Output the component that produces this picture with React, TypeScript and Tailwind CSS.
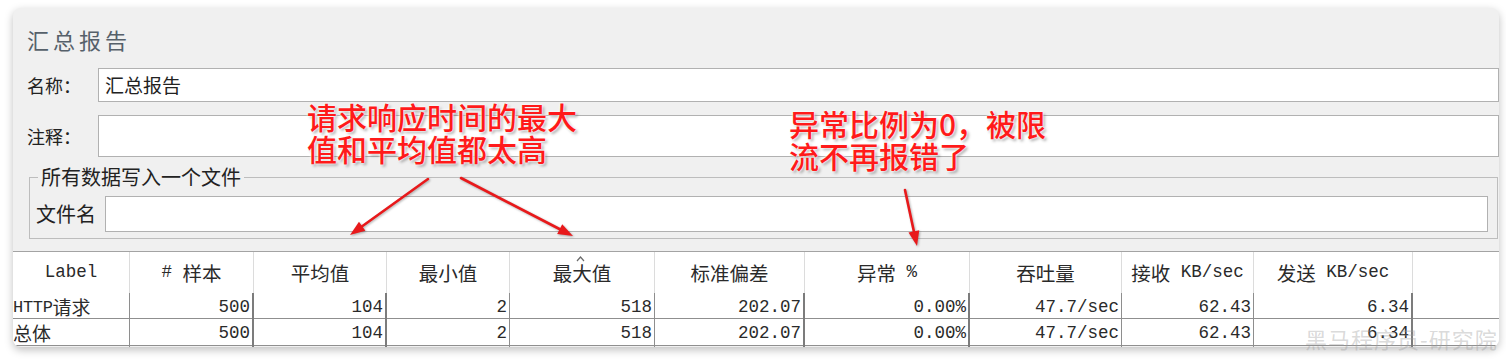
import React from "react";

const CJK = "font-[family-name:'Noto_Sans_CJK_SC','Noto_Sans',sans-serif]";
const MONO = "font-[family-name:'Liberation_Mono','Noto_Sans_CJK_SC',monospace]";

function Arrow({ x1, y1, x2, y2 }: { x1: number; y1: number; x2: number; y2: number }) {
  const dx = x2 - x1;
  const dy = y2 - y1;
  const len = Math.hypot(dx, dy);
  const ux = dx / len;
  const uy = dy / len;
  const L = 15;
  const W = 5.5;
  const bx = x2 - ux * L;
  const by = y2 - uy * L;
  const px = -uy * W;
  const py = ux * W;
  return (
    <g>
      <line x1={x1} y1={y1} x2={bx + ux * 3} y2={by + uy * 3} stroke="#e8191b" strokeWidth={2.6} strokeLinecap="round" />
      <polygon points={`${x2},${y2} ${bx + px},${by + py} ${bx - px},${by - py}`} fill="#e8191b" />
    </g>
  );
}

const C = ({ children }: { children: React.ReactNode }) => (
  <span className={`${CJK} text-[19.5px]`}>{children}</span>
);
const M = ({ children }: { children: React.ReactNode }) => (
  <span className={`${MONO} text-[17.5px]`}>{children}</span>
);

const headers: React.ReactNode[] = [
  <M>Label</M>,
  <>
    <M># </M>
    <C>样本</C>
  </>,
  <C>平均值</C>,
  <C>最小值</C>,
  <C>最大值</C>,
  <C>标准偏差</C>,
  <>
    <C>异常</C>
    <M> %</M>
  </>,
  <C>吞吐量</C>,
  <>
    <C>接收</C>
    <M> KB/sec</M>
  </>,
  <>
    <C>发送</C>
    <M> KB/sec</M>
  </>,
  <></>,
];

const thick = [false, true, true, false, false, true, true, false, false, true, false];

const rows = [
  ["HTTP请求", "500", "104", "2", "518", "202.07", "0.00%", "47.7/sec", "62.43", "6.34", ""],
  ["总体", "500", "104", "2", "518", "202.07", "0.00%", "47.7/sec", "62.43", "6.34", ""],
];

const GRID = "grid grid-cols-[117px_124px_133px_123px_145px_150px_165px_152px_132px_159px_1fr]";

export default function App() {
  return (
    <div className={`relative w-[1506px] h-[363px] bg-white overflow-hidden ${CJK}`}>
      <div className="ml-[13px] mt-[8px] w-[1486px] h-[339px] rounded-[8px] bg-[#f0f0f0] shadow-[0_3px_8px_rgba(0,0,0,0.25)] overflow-hidden flex flex-col">
        {/* title */}
        <div className="pt-[16px] pl-[14px] h-[30px] box-content leading-[30px] text-[22px] tracking-[4px] text-[#56606a]">
          汇总报告
        </div>
        {/* name */}
        <div className="mt-[14px] flex h-[34px] items-center">
          <div className="pl-[14px] w-[85px] shrink-0 text-[18px] text-[#222]">名称：</div>
          <div className="flex-1 h-full bg-white border border-[#b1b1b1] flex items-center pl-[6px] text-[19px] text-[#222]">
            汇总报告
          </div>
        </div>
        {/* note */}
        <div className="mt-[13px] flex h-[42px] items-center">
          <div className="pl-[14px] w-[85px] shrink-0 text-[18px] text-[#222]">注释：</div>
          <div className="flex-1 h-full bg-white border border-[#b1b1b1]" />
        </div>
        {/* fieldset */}
        <fieldset className="mt-[9px] ml-[16px] mr-[1px] border border-[#bdbdbd] pt-[8px] pb-[6px] pl-[6px] pr-[9px]">
          <legend className="ml-[2px] px-[3px] text-[20px] leading-[22px] text-[#222]">所有数据写入一个文件</legend>
          <div className="flex h-[36px] items-center">
            <div className="w-[69px] shrink-0 text-[20px] text-[#222]">文件名</div>
            <div className="flex-1 h-full bg-white border border-[#b1b1b1]" />
          </div>
        </fieldset>
        {/* table */}
        <div className="mt-[12px] border-t border-[#a3a3a3] text-[#2a2a2a]">
          <div className={`${GRID} h-[41px] bg-white`}>
            {headers.map((h, i) => (
              <div
                key={i}
                className={`relative flex items-center justify-center whitespace-pre ${i < 10 ? "border-r border-[#dcdcdc]" : ""}`}
              >
                {h}
                {i === 4 && (
                  <svg className="absolute left-[66px] top-[4px]" width="9" height="6" viewBox="0 0 9 6">
                    <polyline points="1,5 4.5,1 8,5" fill="none" stroke="#6a6a6a" strokeWidth="1.2" />
                  </svg>
                )}
              </div>
            ))}
          </div>
          {rows.map((r, ri) => (
            <div key={ri} className={`${GRID} ${ri === 0 ? "h-[26px]" : "h-[27px]"} bg-white border-b border-[#8f8f8f]`}>
              {r.map((v, ci) => {
                const border = ci === 10 ? "" : thick[ci] ? "border-r-2 border-[#7c7c7c]" : "border-r border-[#8e8e8e]";
                if (ci === 0) {
                  const m = v.match(/^([A-Z]*)(.*)$/)!;
                  return (
                    <div key={ci} className={`flex items-center whitespace-pre ${border}`}>
                      {m[1] && <span className={`${MONO} text-[17px] tracking-[-0.3px]`}>{m[1]}</span>}
                      <span className={`${CJK} text-[19px]`}>{m[2]}</span>
                    </div>
                  );
                }
                return (
                  <div key={ci} className={`flex items-center justify-end pr-[2px] ${MONO} text-[17.5px] ${border}`}>
                    {v}
                  </div>
                );
              })}
            </div>
          ))}
        </div>
      </div>

      {/* watermark */}
      <div className="absolute left-[1305px] top-[325px] text-[22px] leading-[26px] tracking-[1px] text-[#a0a0a0]/40">
        黑马程序员-研究院
      </div>

      {/* annotations */}
      <div className="absolute left-[307px] top-[100px] text-[30px] leading-[32px] font-medium text-[#ff1a1a] [text-shadow:0_0_2px_#fff,0_0_3px_#fff,2px_2px_3px_rgba(0,0,0,0.35)]">
        请求响应时间的最大
        <br />
        值和平均值都太高
      </div>
      <div className="absolute left-[789px] top-[107px] text-[30px] leading-[32px] font-medium text-[#ff1a1a] [text-shadow:0_0_2px_#fff,0_0_3px_#fff,2px_2px_3px_rgba(0,0,0,0.35)]">
        异常比例为0，被限
        <br />
        流不再报错了
      </div>
      <svg className="absolute left-0 top-0 [filter:drop-shadow(1px_1px_1px_rgba(0,0,0,0.3))]" width="1506" height="363">
        <Arrow x1={428} y1={179} x2={350} y2={235} />
        <Arrow x1={461} y1={178} x2={573} y2={236} />
        <Arrow x1={905} y1={190} x2={917} y2={246} />
      </svg>
    </div>
  );
}
